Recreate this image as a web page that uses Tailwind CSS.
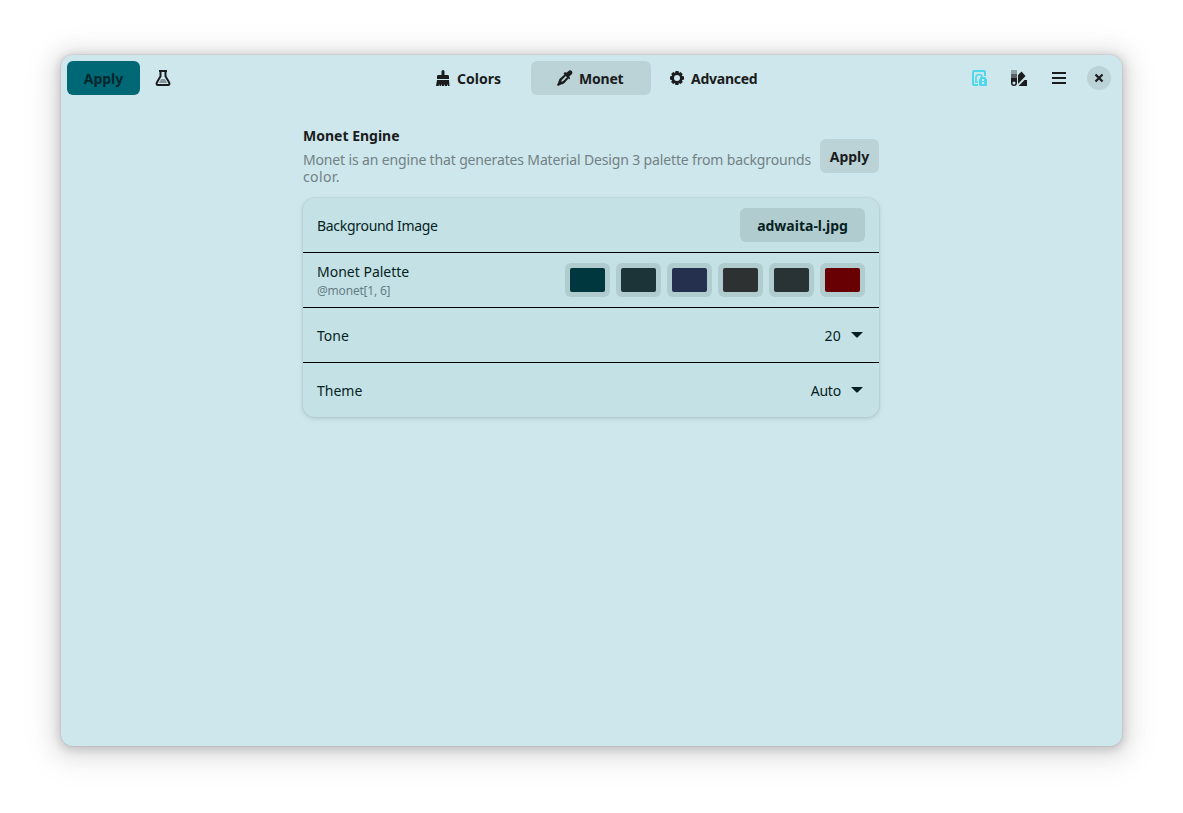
<!DOCTYPE html>
<html lang="en">
<head>
<meta charset="utf-8">
<title>Monet</title>
<script src="https://cdn.jsdelivr.net/npm/@tailwindcss/browser@4"></script>
</head>
<body class="bg-white w-[1183px] h-[813px] overflow-hidden pt-[55px] pl-[61px] font-['Noto_Sans',sans-serif] text-[14px] text-[#1a1c1d]">
<main class="w-[1061px] h-[691px] rounded-xl bg-[#cee7ec] shadow-[0_0_0_1px_rgba(0,0,0,0.05),0_2px_8px_2px_rgba(0,0,0,0.14),0_3px_20px_8px_rgba(0,0,0,0.09),0_6px_32px_16px_rgba(0,0,0,0.04)]">
  <header class="h-[46px] flex items-center justify-between pl-1.5 pr-[11px]">
    <div class="w-[368px] flex items-center">
      <button class="w-[73px] h-[34px] rounded-md bg-[#006874] text-[#00272d] font-bold">Apply</button>
      <svg class="ml-[15px]" width="16" height="16" viewBox="0 0 16 16"><path d="M4 1h8M5.500 1v5.200L2 12.300C1 14 1.800 15 3 15h10c1.200 0 2-1 1-2.700L10.500 6.200V1" fill="none" stroke="currentColor" stroke-width="2"/><path d="M6 9h4l2 4H4z" fill="currentColor" opacity=".4"/></svg>
    </div>
    <nav class="flex-1 flex items-center h-[34px] font-bold">
      <div class="w-[96px] flex items-center"><svg width="16" height="16" viewBox="0 0 16 16"><path d="M6.500 1.500a1.500 1.500 0 0 1 3 0V5H13q1 0 1 1.500V9H2V6.500Q2 5 3 5h3.500zM2 10h12l.5 6H13v-2l-1 2h-2v-2l-1 2H7v-2l-1 2H4.500v-2l-1 2H1z" fill="currentColor"/></svg><span class="ml-1.5">Colors</span></div>
      <div class="w-[120px] h-[34px] rounded-md bg-[#bbd2d6] flex items-center pl-[26px]"><svg width="16" height="16" viewBox="0 0 16 16"><path fill-rule="evenodd" d="M9.500 2.800 8 2 6.500 3.500l1 1L3 8.500c-1.500 1.300-1 3-2 4.500l-1 2 1 1 2-1c1.500-1 3.200-.5 4.500-2l4-4.500 1 1L13 8l-.8-1.500L14.500 4.500c1.300-1.300 1-2.700.2-3.500s-2.200-1-3.500.2zM8.800 6l1.200 1.200-4 4-1.700.5.500-1.700z" fill="currentColor"/></svg><span class="ml-1.5 tracking-[-0.2px]">Monet</span></div>
      <div class="flex items-center pl-[18px]"><svg width="16" height="16" viewBox="0 0 16 16"><path fill-rule="evenodd" d="M6.500 1h3l.5 2 1.500-1 2.200 2-1 1.800 2.300.7v3l-2.200.7 1 1.800-2.200 2.100-1.700-1-.5 1.900h-3L6 13l-1.800 1-2.100-2 1-1.800L1 9.500v-3l2.200-.7-1-1.800 2-2L6 3zM8 5a3 3 0 1 0 0 6 3 3 0 0 0 0-6" fill="currentColor"/></svg><span class="ml-1.5 tracking-[-0.25px]">Advanced</span></div>
    </nav>
    <div class="flex items-center">
      <svg width="16" height="16" viewBox="0 0 16 16" fill="none" stroke="#4fd8eb" stroke-width="2"><path d="M7 15H3q-1 0-1-1V2q0-1 1-1h10q1 0 1 1v4"/><path d="M4 12h3M5 12V7.500Q5 4.500 8 4.500t3 2.500" stroke-width="1.600"/><path d="M8 9h1V8q0-1 1-1h4q1 0 1 1v1h1v6q0 1-1 1H9q-1 0-1-1z" fill="#4fd8eb" stroke="none"/><path d="M11 9h2v2h-2zm0 3h2v2h-2z" fill="#cee7ec" stroke="none"/></svg>
      <svg class="ml-6" width="16" height="16" viewBox="0 0 16 16"><path fill="currentColor" opacity=".35" d="M0 0h6v4H0z"/><path fill="currentColor" opacity=".65" d="M0 4h6v4H0z"/><path fill="currentColor" fill-rule="evenodd" d="M0 8h6v5a3 3 0 0 1-6 0zm3 3.500a1.500 1.500 0 1 0 0 3 1.500 1.500 0 0 0 0-3M7 5l3.500-3.500L14.500 6 7 14zM7.500 16l6-6H16v6z"/></svg>
      <svg class="ml-6" width="16" height="16" viewBox="0 0 16 16"><path d="M1 2h14v2H1zm0 5h14v2H1zm0 5h14v2H1z" fill="currentColor"/></svg>
      <span class="ml-5 size-6 rounded-full bg-[#bbd2d6] flex items-center justify-center"><svg width="16" height="16" viewBox="0 0 16 16"><path d="m4.500 4.500 7 7m0-7-7 7" stroke="currentColor" stroke-width="2.200"/></svg></span>
    </div>
  </header>
  <section class="ml-[242px] w-[576px] pt-[25px]">
    <div class="h-[72px] flex">
      <div class="w-[517px]">
        <h1 class="font-bold leading-[19px]">Monet Engine</h1>
        <p class="mt-[6px] leading-[17px] text-[#718184] whitespace-nowrap tracking-[-0.15px]">Monet is an engine that generates Material Design 3 palette from backgrounds<br><span class="tracking-[0.4px]">color.</span></p>
      </div>
      <button class="mt-[13px] w-[59px] h-[34px] rounded-md bg-[#bbd2d6] font-bold">Apply</button>
    </div>
    <div class="h-[219px] rounded-xl bg-[#c4e1e6] text-[#061f23] divide-y divide-black shadow-[0_0_0_1px_rgba(0,0,0,0.03),0_1px_3px_1px_rgba(0,0,0,0.07),0_2px_6px_2px_rgba(0,0,0,0.03)]">
      <div class="h-[55px] px-3.5 flex items-center justify-between"><span class="tracking-[-0.3px]">Background Image</span><button class="w-[125px] h-[34px] rounded-md bg-[#b0cccf] font-bold">adwaita-l.jpg</button></div>
      <div class="h-[55px] px-3.5 flex items-center justify-between">
        <div><div class="leading-5">Monet Palette</div><div class="text-[12px] leading-[17px] tracking-[-0.2px] text-[#668084]">@monet[1, 6]</div></div>
        <div class="flex gap-1.5">
          <span class="w-[45px] h-[34px] rounded-md bg-[#b0cccf] p-[5px]"><i class="block h-6 rounded-xs bg-[#00363d]"></i></span>
          <span class="w-[45px] h-[34px] rounded-md bg-[#b0cccf] p-[5px]"><i class="block h-6 rounded-xs bg-[#1c3438]"></i></span>
          <span class="w-[45px] h-[34px] rounded-md bg-[#b0cccf] p-[5px]"><i class="block h-6 rounded-xs bg-[#24304d]"></i></span>
          <span class="w-[45px] h-[34px] rounded-md bg-[#b0cccf] p-[5px]"><i class="block h-6 rounded-xs bg-[#2d3132]"></i></span>
          <span class="w-[45px] h-[34px] rounded-md bg-[#b0cccf] p-[5px]"><i class="block h-6 rounded-xs bg-[#293234]"></i></span>
          <span class="w-[45px] h-[34px] rounded-md bg-[#b0cccf] p-[5px]"><i class="block h-6 rounded-xs bg-[#680003]"></i></span>
        </div>
      </div>
      <div class="h-[55px] px-3.5 flex items-center"><span class="flex-1">Tone</span><span class="tracking-[0.3px]">20</span><svg class="ml-2" width="16" height="16" viewBox="0 0 16 16"><path d="M2 5h12l-5 5q-1 1-2 0z" fill="currentColor"/></svg></div>
      <div class="h-[54px] px-3.5 flex items-center"><span class="flex-1">Theme</span><span class="tracking-[-0.2px]">Auto</span><svg class="ml-2" width="16" height="16" viewBox="0 0 16 16"><path d="M2 5h12l-5 5q-1 1-2 0z" fill="currentColor"/></svg></div>
    </div>
  </section>
</main>
</body>
</html>
